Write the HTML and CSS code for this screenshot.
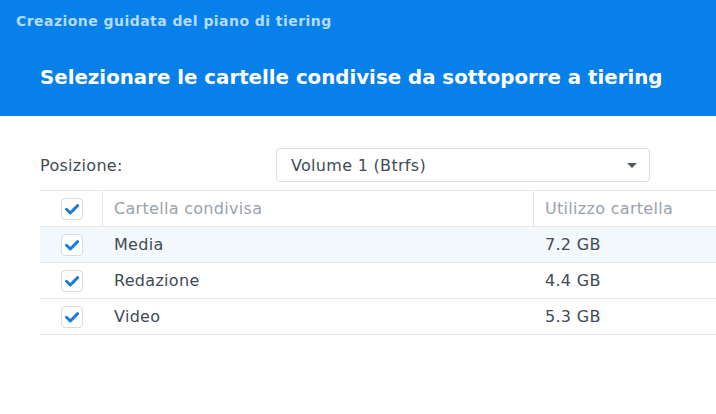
FILE: index.html
```html
<!DOCTYPE html>
<html>
<head>
<meta charset="utf-8">
<link rel="stylesheet" href="styles.css">
</head>
<body>
<div class="page">
  <header class="banner">
    <div class="wizard">Creazione guidata del piano di tiering</div>
    <h1 class="title">Selezionare le cartelle condivise da sottoporre a tiering</h1>
  </header>
  <main class="content">
    <div class="field">
      <span class="label">Posizione:</span>
      <div class="select">
        <span>Volume 1 (Btrfs)</span>
        <span class="caret"></span>
      </div>
    </div>
    <div class="table">
      <div class="row head">
        <div class="cell chk bordered"><span class="box"><svg viewBox="0 0 20 20"><path d="M4.5 10.3 L8.3 14 L15.6 6.6" /></svg></span></div>
        <div class="cell name bordered">Cartella condivisa</div>
        <div class="cell size">Utilizzo cartella</div>
      </div>
      <div class="row sel">
        <div class="cell chk"><span class="box"><svg viewBox="0 0 20 20"><path d="M4.5 10.3 L8.3 14 L15.6 6.6" /></svg></span></div>
        <div class="cell name">Media</div>
        <div class="cell size">7.2 GB</div>
      </div>
      <div class="row">
        <div class="cell chk"><span class="box"><svg viewBox="0 0 20 20"><path d="M4.5 10.3 L8.3 14 L15.6 6.6" /></svg></span></div>
        <div class="cell name">Redazione</div>
        <div class="cell size">4.4 GB</div>
      </div>
      <div class="row">
        <div class="cell chk"><span class="box"><svg viewBox="0 0 20 20"><path d="M4.5 10.3 L8.3 14 L15.6 6.6" /></svg></span></div>
        <div class="cell name">Video</div>
        <div class="cell size">5.3 GB</div>
      </div>
    </div>
  </main>
</div>
</body>
</html>
```

FILE: styles.css
```css
html, body {
  margin: 0;
  padding: 0;
  background: #ffffff;
}
body {
  font-family: "DejaVu Sans", Verdana, sans-serif;
  overflow: hidden;
  width: 716px;
  height: 414px;
}
.page {
  width: 716px;
}
.banner {
  background: #0880ea;
  height: 116px;
  box-sizing: border-box;
  padding: 12px 0 0 16px;
}
.wizard {
  color: #b5dcff;
  font-weight: bold;
  font-size: 14px;
  letter-spacing: 0.45px;
  line-height: 18px;
}
.title {
  margin: 35px 0 0 24px;
  color: #ffffff;
  font-weight: bold;
  font-size: 19.8px;
  line-height: 26px;
}
.content {
  padding: 32px 0 0 40px;
}
.field {
  display: flex;
  align-items: center;
  height: 34px;
}
.label {
  width: 236px;
  font-size: 16px;
  letter-spacing: 0.3px;
  color: #414b55;
}
.select {
  width: 374px;
  height: 34px;
  box-sizing: border-box;
  border: 1px solid #d7dde3;
  border-radius: 4px;
  display: flex;
  align-items: center;
  justify-content: space-between;
  padding: 0 12px 0 14px;
  font-size: 16px;
  letter-spacing: 0.3px;
  color: #414b55;
}
.caret {
  width: 0;
  height: 0;
  border-left: 5px solid transparent;
  border-right: 5px solid transparent;
  border-top: 5px solid #525c66;
}
.table {
  margin-top: 8px;
  width: 676px;
  border-top: 1px solid #e3e8ed;
}
.row {
  display: flex;
  height: 35px;
  border-bottom: 1px solid #e3e8ed;
  font-size: 16px;
  letter-spacing: 0.3px;
  color: #414b55;
}
.row.sel {
  background: #f3f8fd;
}
.row.head {
  color: #9aa2ab;
}
.cell {
  display: flex;
  align-items: center;
  box-sizing: border-box;
}
.chk {
  width: 63px;
  justify-content: center;
  padding-left: 1px;
}
.name {
  width: 431px;
  padding-left: 11px;
}
.size {
  flex: 1;
  padding-left: 11px;
}
.bordered {
  border-right: 1px solid #e3e8ed;
}
.box {
  width: 22px;
  height: 22px;
  box-sizing: border-box;
  border: 1px solid #d4dbe3;
  border-radius: 4px;
  background: #ffffff;
  display: block;
}
.box svg {
  display: block;
  width: 20px;
  height: 20px;
}
.box path {
  fill: none;
  stroke: #1a7bdb;
  stroke-width: 3;
  stroke-linecap: round;
  stroke-linejoin: round;
}
```
